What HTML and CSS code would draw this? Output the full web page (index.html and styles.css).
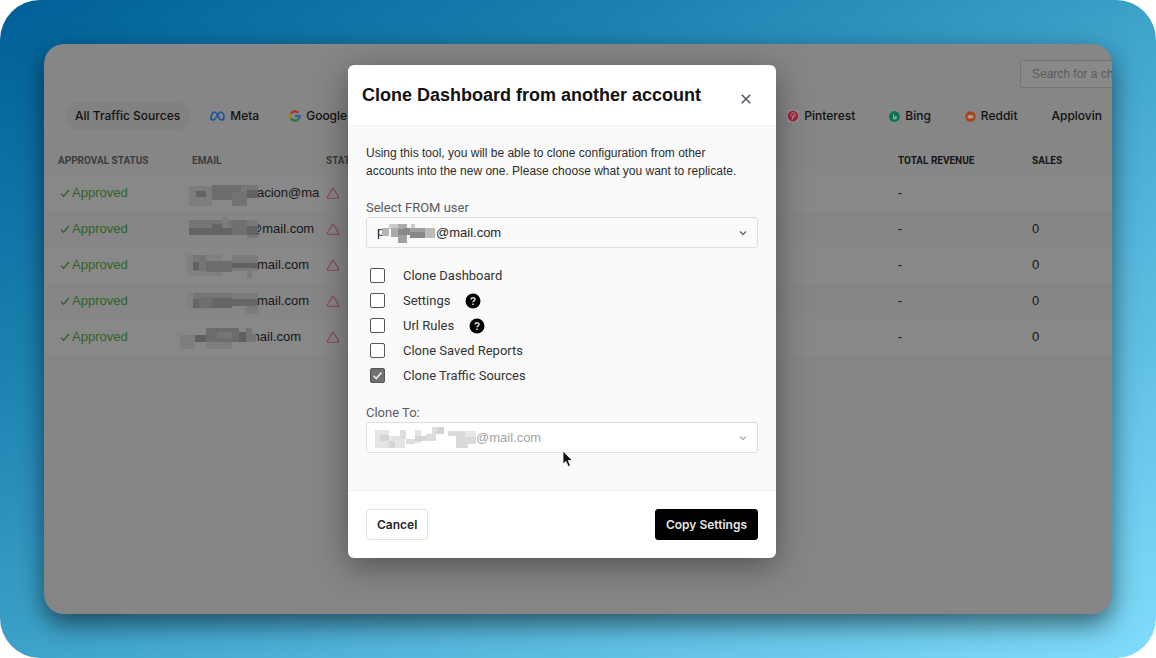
FILE: index.html
```html
<!DOCTYPE html>
<html lang="en">
<head>
  <meta charset="UTF-8">
  <title>Clone Dashboard</title>
  <meta name="viewport" content="width=device-width, initial-scale=1.0">
  <link rel="stylesheet" href="styles.css">
</head>
<body>

  <!-- Shared icons -->
  <svg class="sprite" aria-hidden="true">
    <symbol id="check" viewBox="0 0 10 10"><path d="M1 5.600 3.600 8.200 9 2" fill="none" stroke="currentColor" stroke-width="1.300"/></symbol>
    <symbol id="warning" viewBox="0 0 14 14"><path d="M7 1.800 12.600 11q.5 1.200-.8 1.200H2.200Q.9 12.200 1.400 11z" fill="none" stroke="currentColor" stroke-width="1.100" stroke-linejoin="round"/></symbol>
    <symbol id="chevron" viewBox="0 0 8 8"><path d="M1 2.500 4 5.500 7 2.500" fill="none" stroke="currentColor" stroke-width="1.300"/></symbol>
    <symbol id="help" viewBox="0 0 16 16"><circle cx="8" cy="8" r="7.500" fill="#000"/><path d="M6 6.600C6 4 10.200 4.100 10 6.500 9.900 7.800 8.100 7.900 8 9.300M8 10.600V12" fill="none" stroke="#ddd" stroke-width="1.500"/></symbol>
  </svg>

  <div class="frame">
    <div class="screen">

      <header class="topbar">
        <input class="search" type="text" placeholder="Search for a channel" aria-label="Search for a channel">
      </header>

      <!-- Traffic sources -->
      <nav class="tabs">
        <div class="tab-group">
          <a href="#" class="tab active">All Traffic Sources</a>
          <a href="#" class="tab">
            <svg width="15" height="12" viewBox="0 0 15 12"><path d="M1 8.400C1 5 2.600 2 4.500 2 7.300 2 8.600 10 11.600 10 13.300 10 14 9 14 7.400 14 4.600 12.600 2 10.700 2 8 2 6.600 10 3.200 10 1.800 10 1 9.400 1 8.400z" fill="none" stroke="#1c559c" stroke-width="1.700"/></svg>
            Meta
          </a>
          <a href="#" class="tab">
            <svg width="12" height="12" viewBox="0 0 12 12" fill="none" stroke-width="2.200"><path d="M2 3.600A4.600 4.600 0 0 1 9.400 2.800" stroke="#a83228"/><path d="M2 8.400A4.600 4.600 0 0 1 2 3.600" stroke="#a88313"/><path d="M9.200 9.300A4.600 4.600 0 0 1 2 8.400" stroke="#287d3c"/><path d="M6 6H10.600A4.600 4.600 0 0 1 9.100 9.400" stroke="#2b5fa8"/></svg>
            Google
          </a>
        </div>
        <div class="tab-group right">
          <a href="#" class="tab">
            <svg width="12" height="12" viewBox="0 0 12 12"><path d="M0 0H12V12H0z" fill="#949090"/><circle cx="6" cy="6" r="5.200" fill="#a32035"/><path d="M5 10 6.300 5M4.300 6.600C2.800 4.200 4.500 2.800 6.200 2.800 8.900 2.800 8.800 7.400 6.600 7.300 6 7.200 5.800 6.900 5.800 6.500" fill="none" stroke="#b49a9c" stroke-width="1"/></svg>
            Pinterest
          </a>
          <a href="#" class="tab">
            <svg width="11" height="11" viewBox="0 0 11 11"><circle cx="5.500" cy="5.500" r="5.400" fill="#087452"/><path d="M4 2.500V8L5.500 8.800 8 7.200V5.800L5.300 4.700 6 6.300 4.900 7V2.900z" fill="#91aaa0"/></svg>
            Bing
          </a>
          <a href="#" class="tab">
            <svg width="11" height="11" viewBox="0 0 11 11"><circle cx="5.500" cy="5.500" r="5.200" fill="#a8430f"/><ellipse cx="5.500" cy="5.700" rx="3" ry="1.900" fill="#a89c96"/></svg>
            Reddit
          </a>
          <a href="#" class="tab">Applovin</a>
        </div>
      </nav>

      <!-- Accounts -->
      <table class="accounts">
        <colgroup>
          <col class="col-approval"><col class="col-email"><col><col class="col-revenue"><col class="col-sales">
        </colgroup>
        <thead>
          <tr><th>APPROVAL STATUS</th><th>EMAIL</th><th>STATUS</th><th class="dark">TOTAL REVENUE</th><th class="dark">SALES</th></tr>
        </thead>
        <tbody>
          <tr>
            <td><span class="approved"><svg width="10" height="10"><use href="#check"/></svg>Approved</span></td>
            <td class="email">acion@ma
              <svg class="mosaic" width="78" height="28"><path fill="#7d7d7d" d="M9 7h23v20H9z"/><path fill="#646464" d="M16 12h10v6H16z"/><path fill="#6d6d6d" d="M32 6h29v15H32z"/><path fill="#777" d="M61 6h17v8H61z"/><path fill="#737373" d="M52 13h15v14H52z"/><path fill="#626262" d="M67 11h11v8H67z"/></svg></td>
            <td><svg class="warning" width="14" height="14"><use href="#warning"/></svg></td>
            <td>-</td>
            <td></td>
          </tr>
          <tr>
            <td><span class="approved"><svg width="10" height="10"><use href="#check"/></svg>Approved</span></td>
            <td class="email short">@mail.com
              <svg class="mosaic" width="78" height="28"><path fill="#757575" d="M9 5h43v15H9z"/><path fill="#646464" d="M9 13h43v7H9zM32 9h10v5H32z"/><path fill="#7b7b7b" d="M42 2h6v11h-6z"/><path fill="#707070" d="M52 5h15v15H52z"/><path fill="#797979" d="M67 5h11v18H67z"/><path fill="#636363" d="M67 11h11v9H67z"/></svg></td>
            <td><svg class="warning" width="14" height="14"><use href="#warning"/></svg></td>
            <td>-</td>
            <td>0</td>
          </tr>
          <tr>
            <td><span class="approved"><svg width="10" height="10"><use href="#check"/></svg>Approved</span></td>
            <td class="email">mail.com
              <svg class="mosaic" width="78" height="28"><path fill="#808080" d="M7 4h35v21H7z"/><path fill="#757575" d="M13 4h13v16H13z"/><path fill="#626262" d="M13 11h6v8h-6z"/><path fill="#6d6d6d" d="M26 10h26v11H26z"/><path fill="#7b7b7b" d="M52 4h26v16H52zM67 19h5v8h-5z"/><path fill="#606060" d="M52 12h26v5H52z"/></svg></td>
            <td><svg class="warning" width="14" height="14"><use href="#warning"/></svg></td>
            <td>-</td>
            <td>0</td>
          </tr>
          <tr>
            <td><span class="approved"><svg width="10" height="10"><use href="#check"/></svg>Approved</span></td>
            <td class="email">mail.com
              <svg class="mosaic" width="78" height="28"><path fill="#818181" d="M7 5h30v18H7z"/><path fill="#757575" d="M13 6h39v15H13z"/><path fill="#656565" d="M13 12h6v9h-6zM32 11h20v10H32z"/><path fill="#6e6e6e" d="M19 10h13v11H19z"/><path fill="#7b7b7b" d="M52 6h26v6H52zM66 19h12v8H66z"/><path fill="#686868" d="M52 12h26v7H52z"/></svg></td>
            <td><svg class="warning" width="14" height="14"><use href="#warning"/></svg></td>
            <td>-</td>
            <td>0</td>
          </tr>
          <tr>
            <td><span class="approved"><svg width="10" height="10"><use href="#check"/></svg>Approved</span></td>
            <td class="email short">mail.com
              <svg class="mosaic" width="78" height="28"><path fill="#7e7e7e" d="M0 12h15v14H0zM26 19h26v7H26z"/><path fill="#5f5f5f" d="M15 12h11v7H15z"/><path fill="#6c6c6c" d="M26 5h33v14H26z"/><path fill="#757575" d="M37 9h15v7H37zM66 5h6v14h-6zM72 11h4v8h-4z"/><path fill="#606060" d="M59 9h7v10h-7z"/></svg></td>
            <td><svg class="warning" width="14" height="14"><use href="#warning"/></svg></td>
            <td>-</td>
            <td>0</td>
          </tr>
        </tbody>
      </table>

      <!-- Clone dialog -->
      <div class="overlay">
        <form class="modal" role="dialog" aria-labelledby="modalTitle">
          <div class="modal-head">
            <h1 id="modalTitle">Clone Dashboard from another account</h1>
            <button type="button" class="close" aria-label="Close">
              <svg width="10" height="10" viewBox="0 0 10 10"><path d="M.8.8 9.200 9.200M9.200.8.8 9.200" stroke="#555562" stroke-width="1.600"/></svg>
            </button>
          </div>

          <div class="modal-body">
            <p>Using this tool, you will be able to clone configuration from other accounts into the new one. Please choose what you want to replicate.</p>

            <label class="field-label" for="fromUser">Select FROM user</label>
            <div class="select">
              <select id="fromUser"><option>@mail.com</option></select>
              <span class="initial">p</span>
              <svg class="blocks" width="62" height="22"><path fill="#b5b5b5" d="M7 7h7v8H7z"/><path fill="#ccc" d="M14 3h9v5h-9zM36 3h4v5h-4z"/><path fill="#aaa" d="M16 7h7v9h-7zM23 3h9v5h-9z"/><path fill="#888" d="M23 8h5v6h-5zM28 7h7v7h-7zM35 11h15v6H35z"/><path fill="#a0a0a0" d="M23 14h9v8h-9zM35 7h15v4H35z"/><path fill="#bbb" d="M50 7h10v10H50z"/></svg>
              <svg class="arrow" width="8" height="8"><use href="#chevron"/></svg>
            </div>

            <div class="options">
              <div class="option"><input type="checkbox" id="dashboard"><label for="dashboard">Clone Dashboard</label></div>
              <div class="option"><input type="checkbox" id="settings"><label for="settings">Settings</label><svg width="16" height="16"><use href="#help"/></svg></div>
              <div class="option"><input type="checkbox" id="rules"><label for="rules">Url Rules</label><svg width="16" height="16"><use href="#help"/></svg></div>
              <div class="option"><input type="checkbox" id="reports"><label for="reports">Clone Saved Reports</label></div>
              <div class="option"><input type="checkbox" id="sources" checked><label for="sources">Clone Traffic Sources</label></div>
            </div>

            <label class="field-label" for="toUser">Clone To:</label>
            <div class="select to">
              <select id="toUser" disabled><option>@mail.com</option></select>
              <svg class="blocks" width="104" height="22"><path fill="#e4e4e4" d="M0 4h14v18H0zM14 10h16v12H14zM40 4h6v13h-6z"/><path fill="#d4d4d4" d="M5 9h9v6H5zM14 15h6v7h-6zM40 10h11v5H40zM61 1h8v7h-8z"/><path fill="#ddd" d="M25 4h6v9h-6zM31 13h9v5h-9zM51 8h10v7H51zM57 1h5v7h-5z"/><path fill="#dadada" d="M73 5h17v5H73zM81 10h20v8H81zM81 18h12v4H81z"/><path fill="#e8e8e8" d="M90 5h11v6H90z"/></svg>
              <svg class="arrow" width="8" height="8"><use href="#chevron"/></svg>
            </div>
          </div>

          <div class="modal-foot">
            <button type="button" class="btn">Cancel</button>
            <button type="submit" class="btn primary">Copy Settings</button>
          </div>

          <!-- Pointer -->
          <svg class="pointer" width="12" height="18" viewBox="0 0 12 18"><path d="M1 1V14L4 11.400 6.200 16.500 8.400 15.500 6.300 10.600H10.400z" fill="#111" stroke="#fff" stroke-width=".8"/></svg>
        </form>
      </div>

    </div>
  </div>

</body>
</html>
```

FILE: styles.css
```css
* {
  box-sizing: border-box;
}
body {
  margin: 0;
  background: #fff;
  font-family: "Liberation Sans", Arial, sans-serif;
  font-size: 13px;
  line-height: 18px;
  color: #161616;
}
button, input, select {
  font: inherit;
  color: inherit;
}
.sprite {
  position: absolute;
  width: 0;
  height: 0;
}

/* Backdrop */
.frame {
  display: flex;
  min-height: 100vh;
  padding: 44px;
  border-radius: 40px;
  background: linear-gradient(to bottom right, #005f97 0%, #1b82b0 28%, #40a4cc 52%, #80dcfb 100%);
}
.screen {
  position: relative;
  flex: 1;
  min-width: 0;
  overflow: hidden;
  border-radius: 20px;
  background: #868686;
  box-shadow: 0 10px 26px rgba(0,0,0,0.55);
}

/* Search */
.topbar {
  display: flex;
  justify-content: flex-end;
  padding-top: 16px;
}
.search {
  width: 180px;
  height: 28px;
  margin-right: -88px;
  padding: 0 11px;
  border: 1px solid #757575;
  border-radius: 2px;
  background: #898989;
  font-size: 12px;
}
.search::placeholder {
  color: #5c5c5c;
}

/* Tabs */
.tabs {
  display: flex;
  padding: 14px 0 0 21px;
}
.tab-group {
  display: flex;
  gap: 10px;
}
.tab-group.right {
  gap: 14px;
  margin-left: auto;
}
.tab {
  display: flex;
  align-items: center;
  gap: 5px;
  height: 28px;
  padding: 0 10px;
  border-radius: 14px;
  font-family: Inter, sans-serif;
  font-size: 12px;
  font-weight: 500;
  color: #111;
  text-decoration: none;
  white-space: nowrap;
}
.tab.active {
  background: #818181;
}

/* Table */
.accounts {
  width: 100%;
  margin-top: 17px;
  table-layout: fixed;
  border-collapse: collapse;
}
.col-approval { width: 134px; }
.col-email { width: 140px; }
.col-revenue { width: 134px; }
.col-sales { width: 94px; }
.accounts th {
  height: 28px;
  padding: 0 0 0 14px;
  font-family: Roboto, sans-serif;
  font-size: 10px;
  font-weight: 700;
  text-align: left;
  color: #3c3c3c;
  white-space: nowrap;
}
.accounts th.dark {
  color: #161616;
}
.accounts th:nth-child(3) {
  padding-left: 8px;
}
.accounts td {
  height: 36px;
  padding: 0 0 0 14px;
}
.accounts td:nth-child(3) {
  padding-left: 8px;
}
.accounts tbody tr:nth-child(odd) {
  background: #888;
}
.approved {
  display: flex;
  align-items: center;
  gap: 2px;
  padding-left: 2px;
  color: #31632c;
}
.warning {
  display: block;
  color: #8a464d;
}
.accounts .email {
  position: relative;
  padding-left: 79px;
  white-space: nowrap;
}
.accounts .email.short {
  padding-left: 71px;
}
.mosaic {
  position: absolute;
  top: 4px;
  left: 2px;
}

/* Dialog */
.overlay {
  position: absolute;
  inset: 0;
  display: flex;
  justify-content: center;
  align-items: flex-start;
  padding: 21px 32px 0 0;
}
.modal {
  position: relative;
  width: 100%;
  max-width: 428px;
  border-radius: 6px;
  background: #fff;
  box-shadow: 0 8px 34px rgba(0,0,0,0.4);
}
.modal-head {
  display: flex;
  justify-content: space-between;
  padding: 18px 20px 16px 14px;
}
h1 {
  margin: 0;
  padding-bottom: 2px;
  font-size: 18px;
  line-height: 24px;
  color: #111;
}
.close {
  display: flex;
  align-self: flex-end;
  padding: 5px;
  border: 0;
  background: none;
}
.modal-body {
  padding: 18px 18px 37px;
  border-top: 1px solid #f5f5f5;
  border-bottom: 1px solid #f0f0f0;
  background: #fafafa;
}
.modal-body p {
  max-width: 386px;
  margin: 0 0 19px;
  font-size: 12px;
  color: #2c2c2c;
}
.field-label {
  display: block;
  font-family: Roboto, sans-serif;
  color: #5b5b61;
}
.select {
  position: relative;
}
.select select {
  display: block;
  width: 100%;
  height: 31px;
  padding: 0 24px 0 69px;
  appearance: none;
  border: 1px solid #dedede;
  border-radius: 3px;
  background: #fafafa;
  color: #262626;
  opacity: 1;
}
.select.to select {
  padding-left: 109px;
  background: #fff;
  color: #a3a3a3;
}
.initial {
  position: absolute;
  top: 6px;
  left: 11px;
}
.blocks {
  position: absolute;
  top: 4px;
  left: 9px;
}
.arrow {
  position: absolute;
  top: 12px;
  right: 11px;
  color: #666;
}
.select.to .arrow {
  color: #aaa;
}

/* Options */
.options {
  padding: 15px 0 16px;
  font-family: Roboto, sans-serif;
}
.option {
  display: flex;
  align-items: center;
  height: 25px;
  padding-left: 4px;
  color: #333;
}
.option input {
  width: 15px;
  height: 15px;
  margin: 0 18px 0 0;
  appearance: none;
  border: 1px solid #555;
  border-radius: 2px;
  background: #fff;
}
.option input:checked {
  background: #707070 url("data:image/svg+xml,%3Csvg xmlns='http://www.w3.org/2000/svg' viewBox='0 0 13 13'%3E%3Cpath d='M2.500 6.800 5.200 9.500 10.500 3.500' fill='none' stroke='%23eee' stroke-width='1.600'/%3E%3C/svg%3E") center / 13px no-repeat;
}
.option svg {
  margin-left: 15px;
}

/* Buttons */
.modal-foot {
  display: flex;
  justify-content: space-between;
  padding: 18px;
}
.btn {
  height: 31px;
  padding: 0 10px;
  border: 1px solid #e3e3e3;
  border-radius: 3px;
  background: #fff;
  font-family: Inter, sans-serif;
  font-size: 12px;
  font-weight: 600;
  color: #262626;
}
.btn.primary {
  border-color: #000;
  background: #000;
  color: #e6e6e6;
}
.pointer {
  position: absolute;
  top: 385px;
  left: 214px;
}
```
